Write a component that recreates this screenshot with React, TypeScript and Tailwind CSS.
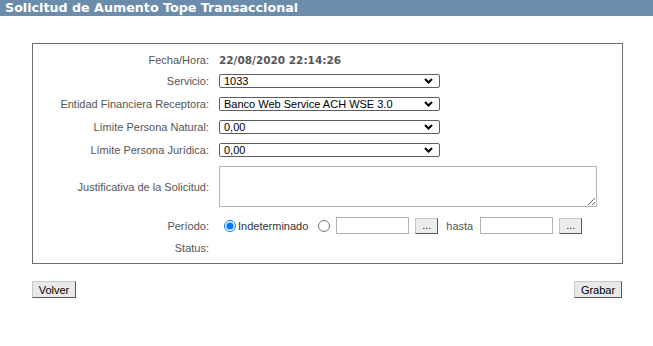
import React from "react";

const lab = "text-[11px] leading-[14px] text-[#555555] text-right w-[176px] shrink-0 pr-0";
const font = { fontFamily: '"Liberation Sans", Arial, sans-serif' };

function Chevron() {
  return (
    <svg width="9" height="6" viewBox="0 0 9 6" className="shrink-0">
      <path d="M1 1 L4.5 4.5 L8 1" fill="none" stroke="#000" strokeWidth="2" />
    </svg>
  );
}

function FakeSelect({ value }: { value: string }) {
  return (
    <div className="w-[221px] h-[14px] border border-[#5f5f5f] rounded-[2px] flex items-center justify-between pl-[4px] pr-[6px] bg-white">
      <span className="text-[11px] leading-[12px] text-black whitespace-nowrap">{value}</span>
      <Chevron />
    </div>
  );
}

function Row({ label, children, h = "h-[23px]" }: { label: string; children?: React.ReactNode; h?: string }) {
  return (
    <div className={`flex items-center gap-[10px] ${h}`}>
      <div className={lab}>{label}</div>
      {children}
    </div>
  );
}

function DotsBtn() {
  return (
    <div className="w-[23px] h-[16px] bg-[#ececec] border border-t-[#c8c8c8] border-l-[#c8c8c8] border-r-[#5a5a5a] border-b-[#5a5a5a] flex items-center justify-center text-[11px] leading-[10px] text-[#222] pb-[2px]">
      ...
    </div>
  );
}

export default function App() {
  return (
    <div className="w-[653px] h-[346px] bg-white overflow-hidden" style={font}>
      <div
        className="h-[16px] bg-[#6b8dab] pl-[5px] text-white font-bold text-[12.7px] leading-[16px] whitespace-nowrap"
        style={{ fontFamily: '"DejaVu Sans", Verdana, sans-serif' }}
      >
        Solicitud de Aumento Tope Transaccional
      </div>

      <div className="ml-[32px] mt-[27px] w-[591px] h-[221px] border border-[#6e6e6e] flex flex-col">
        <div className="flex gap-[10px] h-[25px] pt-[9px]">
          <div className={lab}>Fecha/Hora:</div>
          <div
            className="text-[10.5px] leading-[14px] font-bold text-[#555555] whitespace-nowrap"
            style={{ fontFamily: '"DejaVu Sans", Verdana, sans-serif' }}
          >
            22/08/2020 22:14:26
          </div>
        </div>
        <Row label="Servicio:">
          <FakeSelect value="1033" />
        </Row>
        <Row label="Entidad Financiera Receptora:">
          <FakeSelect value="Banco Web Service ACH WSE 3.0" />
        </Row>
        <Row label="Límite Persona Natural:">
          <FakeSelect value="0,00" />
        </Row>
        <Row label="Límite Persona Jurídica:">
          <FakeSelect value="0,00" />
        </Row>
        <div className="flex items-center gap-[10px] h-[41px] mt-[5px]">
          <div className={lab}>Justificativa de la Solicitud:</div>
          <textarea
            className="w-[378px] h-[41px] border border-[#b4b4b4] bg-white outline-none"
            defaultValue=""
          />
        </div>
        <div className="flex items-center gap-[10px] h-[17px] mt-[10px]">
          <div className={lab}>Período:</div>
          <div className="flex items-center text-[11px] leading-[14px] text-[#555555]">
            <input type="radio" name="p" defaultChecked className="m-0 ml-[5px] w-[12px] h-[12px]" />
            <span className="ml-[2px] text-[#333]">Indeterminado</span>
            <input type="radio" name="p" className="m-0 ml-[10px] w-[12px] h-[12px]" />
            <div className="ml-[6px] w-[73px] h-[17px] border border-[#b4b4b4] bg-white" />
            <div className="ml-[6px]">
              <DotsBtn />
            </div>
            <span className="ml-[8px]">hasta</span>
            <div className="ml-[7px] w-[73px] h-[17px] border border-[#b4b4b4] bg-white" />
            <div className="ml-[6px]">
              <DotsBtn />
            </div>
          </div>
        </div>
        <Row label="Status:" h="h-[16px] mt-[6px]" />
      </div>

      <div className="ml-[32px] w-[590px] mt-[17px] flex justify-between">
        <div className="w-[44px] h-[17px] bg-[#e9e9e9] border border-t-[#c8c8c8] border-l-[#c8c8c8] border-r-[#5a5a5a] border-b-[#5a5a5a] flex items-center justify-center text-[11px] leading-[12px] text-black">
          Volver
        </div>
        <div className="w-[48px] h-[17px] bg-[#e9e9e9] border border-t-[#c8c8c8] border-l-[#c8c8c8] border-r-[#5a5a5a] border-b-[#5a5a5a] flex items-center justify-center text-[11px] leading-[12px] text-black">
          Grabar
        </div>
      </div>
    </div>
  );
}
